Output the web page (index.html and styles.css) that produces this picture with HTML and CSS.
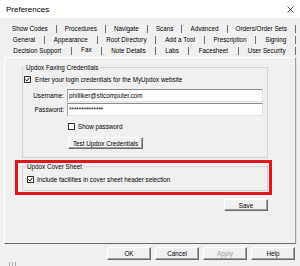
FILE: index.html
```html
<!DOCTYPE html>
<html lang="en">
<head>
    <meta charset="UTF-8">
    <meta name="viewport" content="width=device-width, initial-scale=1.0">
    <title>Preferences</title>
    <link rel="stylesheet" href="styles.css">
</head>
<body>
    <div class="window">
        <div class="titlebar">
            <span class="title">Preferences</span>
            <svg class="close" width="7" height="7" viewBox="0 0 7 7">
                <path d="M0.5 0.5 L6.5 6.5 M6.5 0.5 L0.5 6.5" stroke="#222" stroke-width="0.8" fill="none"/>
            </svg>
        </div>

        <div class="tabs">
            <div class="tab-row">
                <span class="tab">Show Codes</span>
                <span class="tab">Procedures</span>
                <span class="tab">Navigate</span>
                <span class="tab">Scans</span>
                <span class="tab">Advanced</span>
                <span class="tab">Orders/Order Sets</span>
            </div>
            <div class="tab-row">
                <span class="tab">General</span>
                <span class="tab">Appearance</span>
                <span class="tab">Root Directory</span>
                <span class="tab">Add a Tool</span>
                <span class="tab">Prescription</span>
                <span class="tab">Signing</span>
            </div>
            <div class="tab-row">
                <span class="tab">Decision Support</span>
                <span class="tab active">Fax</span>
                <span class="tab">Note Details</span>
                <span class="tab">Labs</span>
                <span class="tab">Facesheet</span>
                <span class="tab">User Security</span>
            </div>
        </div>

        <div class="panel">
            <fieldset class="group faxing">
                <legend>Updox Faxing Credentials</legend>
                <label class="check-row login-row">
                    <span class="check">
                        <svg width="5" height="5" viewBox="0 0 5 5"><path d="M0.5 2.4 L1.9 3.9 L4.5 0.8" stroke="#000" stroke-width="1" fill="none"/></svg>
                    </span>
                    Enter your login credentials for the MyUpdox website
                </label>
                <div class="field user-field">
                    <span class="field-label">Username:</span>
                    <input class="field-input" type="text" value="philliker@sticomputer.com">
                </div>
                <div class="field">
                    <span class="field-label">Password:</span>
                    <input class="field-input" type="text" value="**************">
                </div>
                <label class="check-row show-pw">
                    <span class="check"></span>
                    Show password
                </label>
                <button class="btn test-btn">Test Updox Credentials</button>
            </fieldset>

            <div class="highlight">
                <fieldset class="group cover">
                    <legend>Updox Cover Sheet</legend>
                    <label class="check-row cover-row">
                        <span class="check">
                            <svg width="5" height="5" viewBox="0 0 5 5"><path d="M0.5 2.4 L1.9 3.9 L4.5 0.8" stroke="#000" stroke-width="1" fill="none"/></svg>
                        </span>
                        Include facilities in cover sheet header selection
                    </label>
                </fieldset>
            </div>

            <div class="save-row">
                <button class="btn save-btn">Save</button>
            </div>
        </div>

        <div class="footer">
            <button class="btn dlg-btn">OK</button>
            <button class="btn dlg-btn">Cancel</button>
            <button class="btn dlg-btn disabled">Apply</button>
            <button class="btn dlg-btn">Help</button>
        </div>
        <div class="grip">
            <svg width="7" height="4" viewBox="0 0 7 4">
                <path d="M0.5 0 V4 M3.5 0 V4 M6.5 0 V4" stroke="#a8a8a8" stroke-width="1"/>
            </svg>
        </div>
    </div>
</body>
</html>
```

FILE: styles.css
```css
body {
    margin: 0;
    background: #f0f0f0;
    font-family: "Liberation Sans", Arial, sans-serif;
    font-size: 6.3px;
    color: #000;
}
.window {
    width: 300px;
    height: 266px;
    overflow: hidden;
    background: #f0f0f0;
}
.titlebar {
    height: 18px;
    background: #fff;
    display: flex;
    align-items: center;
    justify-content: space-between;
    padding: 0 6px;
}
.title {
    font-size: 8px;
}
.close {
    display: block;
}

/* tab strip, three rows */
.tabs {
    margin: 6px 0 0 4px;
    width: 292px;
}
.tab-row {
    display: flex;
    height: 11px;
}
.tab {
    flex: 1 1 auto;
    height: 8px;
    line-height: 8px;
    margin-top: 1px;
    padding: 0 6px;
    text-align: center;
    white-space: nowrap;
    border-right: 1px solid #707070;
}
.tab.active {
    line-height: 6px;
}

.panel {
    margin-left: 4px;
    width: 292px;
    height: 187px;
    box-sizing: border-box;
    border: 1px solid;
    border-color: #fff #a0a0a0 #696969 #fff;
    box-shadow: 1px 0 0 #e3e3e3;
}

/* group boxes */
.group {
    width: 246px;
    box-sizing: border-box;
    border: 1px solid #d5d5d5;
    min-width: 0;
}
.group legend {
    height: 7px;
    line-height: 7px;
    padding: 0 1px;
}
.faxing {
    margin: 6px 0 0 17px;
    padding: 0 0 8px 0;
}
.faxing legend {
    margin-left: 2px;
}
.cover {
    margin: 0 0 0 4px;
    padding: 0 0 7px 0;
}
.cover legend {
    margin-left: 3px;
}

.check-row {
    display: flex;
    align-items: center;
    height: 8px;
}
.check {
    width: 7px;
    height: 7px;
    box-sizing: border-box;
    border: 1px solid #333;
    background: #fff;
    display: flex;
    align-items: center;
    justify-content: center;
}
.login-row {
    margin: 4px 0 0 1px;
    gap: 4px;
}
.cover-row {
    margin: 5px 0 0 4px;
    gap: 3px;
}
.show-pw {
    margin: 6px 0 0 45px;
    gap: 3px;
}

.field {
    display: flex;
    align-items: center;
    gap: 3px;
    margin-top: 1px;
}
.user-field {
    margin-top: 6px;
}
.field-label {
    width: 41px;
    text-align: right;
}
.field-input {
    width: 196px;
    height: 13px;
    box-sizing: border-box;
    margin: 0;
    padding: 0 1px;
    font: inherit;
    color: #000;
    background: #fff;
    border: 1px solid #e3e3e3;
    border-top-color: #8a8a8a;
    border-left-color: #a8a8a8;
    outline: none;
}

/* buttons */
.btn {
    display: block;
    box-sizing: border-box;
    margin: 0;
    padding: 0;
    font: inherit;
    color: #000;
    background: #f0f0f0;
    border: 1px solid;
    border-color: #fff #696969 #696969 #fff;
    box-shadow: inset -1px -1px 0 #a0a0a0;
}
.test-btn {
    width: 75px;
    height: 12px;
    margin: 7px 0 0 45px;
}
.highlight {
    margin: 2px 0 0 10px;
    width: 257px;
    box-sizing: border-box;
    border: 3px solid #e3151c;
    padding-bottom: 1px;
}
.save-row {
    display: flex;
    justify-content: flex-end;
    width: 263px;
    margin-top: 4px;
}
.save-btn {
    width: 44px;
    height: 12px;
}

.footer {
    display: flex;
    justify-content: flex-end;
    gap: 4px;
    margin-top: 3px;
    padding-right: 5px;
}
.dlg-btn {
    width: 44px;
    height: 13px;
}
.dlg-btn.disabled {
    color: #a0a0a0;
}
.grip {
    margin: 2px 0 0 9px;
    line-height: 0;
}
```
